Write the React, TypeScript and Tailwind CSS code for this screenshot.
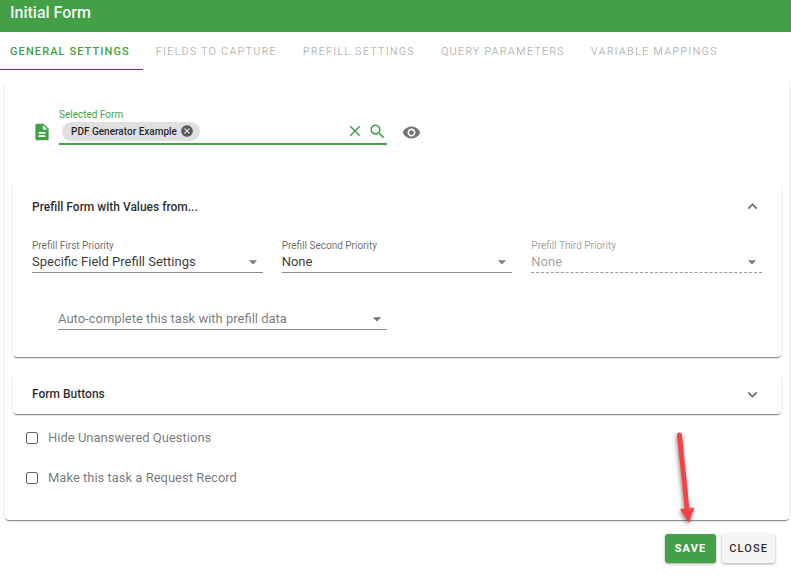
import { useState } from "react";
import { MdArrowDropDown, MdCancel, MdClose, MdDescription, MdExpandLess, MdExpandMore, MdRemoveRedEye, MdSearch } from "react-icons/md";

const tabs = [
  "General Settings",
  "Fields to Capture",
  "Prefill Settings",
  "Query Parameters",
  "Variable Mappings",
];

const cardShadow =
  "shadow-[0_2px_1px_-1px_rgba(0,0,0,0.3),0_1px_1px_0_rgba(0,0,0,0.2),0_1px_3px_0_rgba(0,0,0,0.12)]";

type SelectFieldProps = {
  id: string;
  label: string;
  options: string[];
  disabled?: boolean;
};

function SelectField({ id, label, options, disabled }: SelectFieldProps) {
  return (
    <div className={disabled ? "text-black/40" : "text-black/60"}>
      <label htmlFor={id} className="block text-[10px] leading-3">
        {label}
      </label>
      <div
        className={
          disabled
            ? "relative border-b border-dashed border-black/40"
            : "relative border-b border-black/45"
        }
      >
        <select
          id={id}
          disabled={disabled}
          className={
            disabled
              ? "block w-full h-5 appearance-none bg-transparent pr-5 text-[13px] text-black/40 opacity-100 outline-none"
              : "block w-full h-5 appearance-none bg-transparent pr-5 text-[13px] text-black/80 outline-none"
          }
        >
          {options.map((option) => (
            <option key={option}>{option}</option>
          ))}
        </select>
        <MdArrowDropDown className="pointer-events-none absolute right-0 top-0 size-5 text-black/50" />
      </div>
    </div>
  );
}

export default function App() {
  const [activeTab, setActiveTab] = useState(tabs[0]);
  const [prefillOpen, setPrefillOpen] = useState(true);

  return (
    <div className="font-[Roboto,sans-serif] bg-white text-black/85">
      {/* HEADER */}
      <header className="h-8 bg-[#43a047] px-2.5 pt-px">
        <h1 className="text-base leading-6 font-medium text-white/95">Initial Form</h1>
      </header>

      {/* TABS */}
      <nav role="tablist" className="flex overflow-hidden">
        {tabs.map((tab) => (
          <button
            key={tab}
            type="button"
            role="tab"
            aria-selected={tab === activeTab}
            onClick={() => setActiveTab(tab)}
            className={
              tab === activeTab
                ? "h-[38px] shrink-0 border-b border-b-[#7b1fa2] px-[13px] pt-[3px] first:pl-2.5 text-[11px] font-medium uppercase tracking-widest text-[#43a047]"
                : "h-[38px] shrink-0 border-b border-b-transparent px-[13px] pt-[3px] first:pl-2.5 text-[11px] uppercase tracking-widest text-black/30"
            }
          >
            {tab}
          </button>
        ))}
      </nav>

      <main className={`mt-2.5 ml-[5px] mr-0.5 rounded px-2 pt-[29px] pb-[22px] ${cardShadow}`}>
        {/* SELECTED FORM */}
        <div className="-mx-2 flex items-end">
          <div className="flex w-1/2 items-end gap-[7px] pl-[27px] pr-2.5">
            <MdDescription className="mb-[3px] size-5 shrink-0 text-[#43a047]" />
            <div className="min-w-0 flex-1">
              <label htmlFor="selected-form" className="block text-[10px] leading-3 text-[#43a047]">
                Selected Form
              </label>
              <div className="flex h-6 items-center border-b-2 border-[#43a047] pb-0.5 pl-[3px] text-[#43a047]">
                <span className="flex h-[19px] shrink-0 items-center gap-[3px] rounded-full bg-[#e0e0e0] pl-[9px] pr-1.5 text-[10px] font-medium text-black/85">
                  PDF Generator Example
                  <button type="button" aria-label="Remove form" className="text-black/60">
                    <MdCancel className="size-3.5" />
                  </button>
                </span>
                <input id="selected-form" type="text" className="min-w-0 flex-1 bg-transparent px-1 text-[13px] outline-none" />
                <button type="button" aria-label="Clear">
                  <MdClose className="size-[18px]" />
                </button>
                <button type="button" aria-label="Search" className="ml-1">
                  <MdSearch className="size-[19px]" />
                </button>
              </div>
            </div>
          </div>
          <button type="button" aria-label="Preview form" className="mb-[3px] ml-[5px] text-black/55">
            <MdRemoveRedEye className="size-[19px]" />
          </button>
        </div>

        {/* PREFILL */}
        <section className={`mt-9 rounded ${cardShadow}`}>
          <button
            type="button"
            aria-expanded={prefillOpen}
            onClick={() => setPrefillOpen(!prefillOpen)}
            className="flex h-[51px] w-full items-center justify-between px-[19px] text-xs font-medium"
          >
            Prefill Form with Values from...
            <MdExpandLess className="size-[19px] text-black/60" />
          </button>

          {prefillOpen && (
            <div className="pt-2 pb-[27px]">
              <div className="grid grid-cols-3 gap-[19px] px-[19px]">
                <SelectField
                  id="first-priority"
                  label="Prefill First Priority"
                  options={["Specific Field Prefill Settings", "None"]}
                />
                <SelectField id="second-priority" label="Prefill Second Priority" options={["None"]} />
                <SelectField id="third-priority" label="Prefill Third Priority" options={["None"]} disabled />
              </div>

              <div className="mt-9 w-1/2 pl-[45px] pr-2.5">
                <div className="relative border-b border-black/45 text-black/55">
                  <select
                    aria-label="Auto-complete this task with prefill data"
                    className="block w-full h-5 appearance-none bg-transparent pr-5 text-[13px] outline-none"
                  >
                    <option>Auto-complete this task with prefill data</option>
                  </select>
                  <MdArrowDropDown className="pointer-events-none absolute right-0 top-0 size-5" />
                </div>
              </div>
            </div>
          )}
        </section>

        {/* FORM BUTTONS */}
        <section className={`mt-[17px] rounded ${cardShadow}`}>
          <button
            type="button"
            aria-expanded={false}
            className="flex h-10 w-full items-center justify-between px-[19px] text-xs font-medium"
          >
            Form Buttons
            <MdExpandMore className="size-[19px] text-black/60" />
          </button>
        </section>

        {/* OPTIONS */}
        <div className="mt-1 pl-[13px]">
          {["Hide Unanswered Questions", "Make this task a Request Record"].map((text) => (
            <label key={text} className="flex h-10 items-center gap-2.5 text-[13px] text-black/55">
              <input
                type="checkbox"
                className="size-3 shrink-0 appearance-none rounded-[2px] border border-black/60 checked:bg-[#43a047]"
              />
              {text}
            </label>
          ))}
        </div>
      </main>

      {/* ACTIONS */}
      <footer className="flex justify-end gap-1.5 pt-3.5 pb-5 pr-4">
        <div className="relative">
          <button
            type="button"
            className="h-[29px] rounded-[3px] bg-[#43a047] px-2.5 pt-0.5 text-[11px] font-bold uppercase tracking-widest text-white shadow-[0_1px_3px_rgba(0,0,0,0.35)]"
          >
            Save
          </button>
          <svg
            aria-hidden="true"
            viewBox="0 0 30 100"
            className="pointer-events-none absolute bottom-full left-1.5 h-[100px] w-[30px] overflow-visible drop-shadow-[-1px_2px_2px_rgba(0,0,0,0.45)]"
          >
            <path d="M6 1C6 -2.5 11 -2.5 11 1L18.3 74L23.3 73.6L18 89L9 75L13.7 74.6Z" fill="#fb3f42" />
          </svg>
        </div>
        <button
          type="button"
          className="h-[29px] rounded-[3px] bg-[#f5f5f5] px-[7px] pt-0.5 text-[11px] font-medium uppercase tracking-widest shadow-[0_1px_3px_rgba(0,0,0,0.35)]"
        >
          Close
        </button>
      </footer>
    </div>
  );
}
